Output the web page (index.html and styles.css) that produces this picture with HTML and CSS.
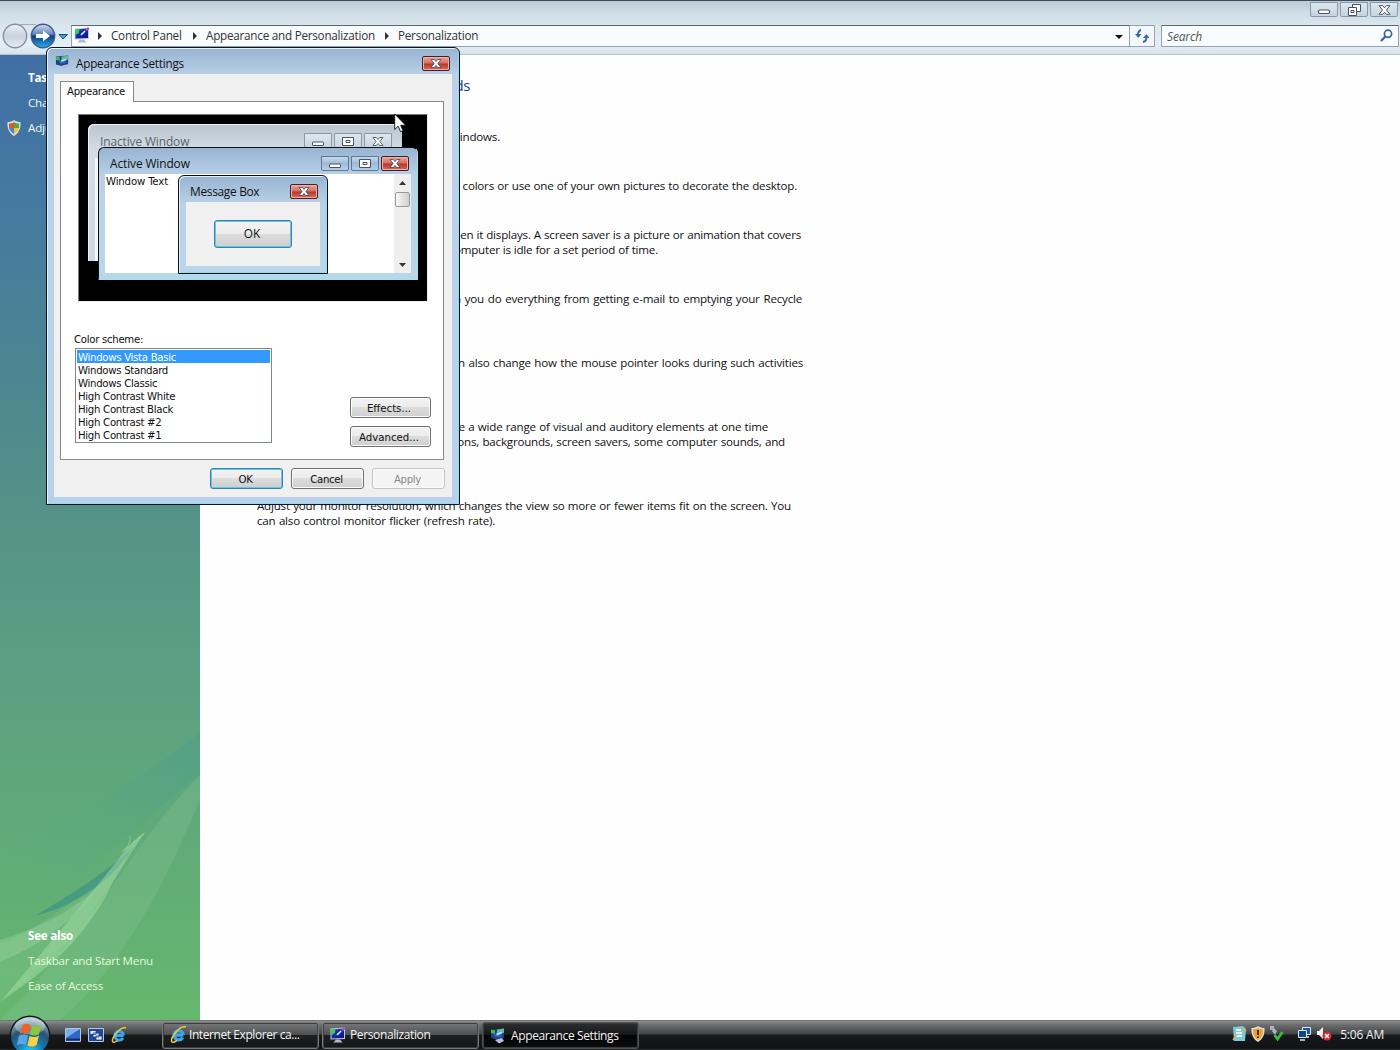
FILE: index.html
```html
<!DOCTYPE html>
<html lang="en">
<head>
<meta charset="utf-8">
<title>Personalization</title>
<link rel="stylesheet" href="styles.css">
</head>
<body>
<svg class="defs" width="0" height="0" aria-hidden="true">
  <defs>
    <linearGradient id="scr" x1="0" y1="0" x2="1" y2="1"><stop offset="0" stop-color="#2bd04a"/><stop offset=".35" stop-color="#1a2fae"/><stop offset="1" stop-color="#0b1478"/></linearGradient>
    <linearGradient id="shine" x1="0" y1="0" x2="0" y2="1"><stop offset="0" stop-color="#d3dff0"/><stop offset=".42" stop-color="#6486c2"/><stop offset=".5" stop-color="#0f3a86"/><stop offset="1" stop-color="#23b4ee"/></linearGradient>
    <linearGradient id="grey" x1="0" y1="0" x2="0" y2="1"><stop offset="0" stop-color="#eef3f6"/><stop offset=".5" stop-color="#c9d3dc"/><stop offset="1" stop-color="#e5edf2"/></linearGradient>
    <radialGradient id="orb" cx=".5" cy=".95" r=".9"><stop offset="0" stop-color="#37d3f2"/><stop offset=".4" stop-color="#1579b0"/><stop offset=".7" stop-color="#2a526f"/><stop offset="1" stop-color="#a9c0cc"/></radialGradient>
    <symbol id="monitor" viewBox="0 0 16 16">
      <path d="M.5 1.500 15 .5V12L.5 12.500z" fill="#c3cde2"/><path d="M1.500 2.500 14 1.500V11L1.500 11.500z" fill="url(#scr)"/><path d="M1.500 2.500 5 2v4L1.500 8z" fill="#2fd34d"/>
      <path d="M7 8 11 4" stroke="#e8f0ff" stroke-width="1.600"/><path d="M11 3l3-3 1.500 2-2.500 2z" fill="#b14fae"/>
      <path d="M6 12.500h4l2.500 3h-9z" fill="#aebccb"/>
    </symbol>
    <symbol id="display" viewBox="0 0 16 16">
      <path d="M1 1.500l13-1v9L8 12 1 10z" fill="#23407f"/><path d="M1 1.500l4 1v3.500L1 5z" fill="#3bc04a"/><path d="M7 1.500l7-1V5L7 5.500z" fill="#5fb9a5"/>
      <path d="M4 6l8-1-1 4-6 0z" fill="#2c62c9"/><path d="M6 5.500l6-2v2l-5 2z" fill="#a7dcf0"/><path d="M5 12l7-2 2 3-5 2.500z" fill="#b3bfd3"/>
    </symbol>
    <symbol id="ie" viewBox="0 0 16 16">
      <path d="M12.600 8.500H5.200M12.600 8.300A4.400 4.400 0 1 0 12 11" fill="none" stroke="#38a8ee" stroke-width="3"/>
      <path d="M2 15C-.5 12 9-1 15 1M2 15c1 .7 3-.3 4.500-1.500" fill="none" stroke="#f2cb3d" stroke-width="1.500"/>
    </symbol>
    <symbol id="shield" viewBox="0 0 14 16">
      <path d="M7 0c2 1.500 4 2 6.500 2 .5 6-1.500 11-6.500 14C2 13 0 8 .5 2 3 2 5 1.500 7 0z" fill="#d7dde2"/>
      <path d="M7 2v6H2V3.500C4 3.500 5.500 3 7 2z" fill="#d8592b"/><path d="M7 2c1.500 1 3 1.500 5 1.500V8H7z" fill="#57a83b"/>
      <path d="M2 8h5v6C4 12 2.500 10 2 8z" fill="#4a86cf"/><path d="M12 8H7v6c3-2 4.500-4 5-6z" fill="#f0c432"/>
    </symbol>
    <symbol id="x" viewBox="0 0 12 9"><path d="M1 .5h3.300L6 2.500 7.700.5H11L7.900 4.500 11 8.500H7.700L6 6.500 4.300 8.500H1l3.100-4z" fill="#fff" stroke="#4a5266" stroke-width=".9"/></symbol>
    <symbol id="min" viewBox="0 0 12 9"><rect x=".5" y="5" width="11" height="3.500" rx=".5" fill="#fff" stroke="#4a5266"/></symbol>
    <symbol id="max" viewBox="0 0 12 9"><path d="M.5.5h11v8H.5z" fill="#fff" stroke="#4a5266"/><path d="M4 3.500h4v2H4z" fill="#fff" stroke="#4a5266"/></symbol>
  </defs>
</svg>

<div class="explorer">
  <header class="frame">
    <div class="caption">
      <span class="cap"><svg width="12" height="9"><use href="#min"/></svg></span>
      <span class="cap"><svg width="13" height="12" viewBox="0 0 13 12"><path d="M4.500.5h8v7h-8z" fill="#fff" stroke="#4a5266"/><path d="M.5 3.500h8v8h-8z" fill="#fff" stroke="#4a5266"/><path d="M3 6.500h3v2H3z" fill="none" stroke="#4a5266"/></svg></span>
      <span class="cap"><svg width="13" height="10"><use href="#x"/></svg></span>
    </div>
    <div class="nav">
      <svg class="travel" width="70" height="28" viewBox="0 0 70 28">
        <path d="M20 2.500h16" stroke="#9fb0bc"/>
        <circle cx="15" cy="14" r="11.700" fill="url(#grey)" stroke="#8493a1" stroke-width="1.400"/>
        <circle cx="43" cy="14" r="11.700" fill="url(#shine)" stroke="#45597e" stroke-width="1.400"/>
        <path d="M36 12h7V8.500l7 5.500-7 5.500V16h-7z" fill="#fff"/>
        <path d="M59 12.500h8.500L63.200 17z" fill="#3da6d8" stroke="#1c4c86"/>
      </svg>
      <div class="address">
        <svg width="16" height="16"><use href="#monitor"/></svg>
        <i class="sep"></i><span class="c1">Control Panel</span>
        <i class="sep"></i><span class="c2">Appearance and Personalization</span>
        <i class="sep"></i><span class="c3">Personalization</span>
        <i class="drop"></i>
      </div>
      <div class="refresh"><svg width="15" height="14" viewBox="0 0 15 14"><path d="M6 1C3.500 1.500 3 3 3 6" fill="none" stroke="#3f68a8" stroke-width="2"/><path d="M0 5h6.500L3.200 9z" fill="#3f68a8"/><path d="M8 13c3-.5 3.500-2 3.500-5" fill="none" stroke="#3f68a8" stroke-width="2"/><path d="M8 9h6.500l-3.200-4z" fill="#3f68a8"/></svg></div>
      <div class="search"><em>Search</em><svg width="13" height="13" viewBox="0 0 13 13"><circle cx="8" cy="4.800" r="3.600" fill="none" stroke="#3e5fa8" stroke-width="1.700"/><path d="M5.300 7.500 1 12" stroke="#3e5fa8" stroke-width="2.200"/></svg></div>
    </div>
  </header>

  <div class="body">
    <aside class="side">
      <svg class="swoosh" width="200" height="380" viewBox="0 0 200 380" preserveAspectRatio="none">
        <defs><linearGradient id="fade" x1="0" y1="1" x2="1" y2="0"><stop offset="0" stop-color="#5fb27c" stop-opacity="0"/><stop offset="1" stop-color="#4a9892"/></linearGradient></defs>
        <path d="M0 215C70 180 140 140 200 93V135C150 170 80 250 0 285z" fill="url(#fade)" opacity=".4"/>
        <path d="M200 135C150 185 120 240 90 275L30 350 0 380h60C130 320 170 230 200 160z" fill="#8cc79c" opacity=".25"/>
        <path d="M0 305C60 275 95 250 145 192 100 265 60 320 0 360z" fill="#93d29a" opacity=".2"/>
        <path d="M35 276C68 256 100 237 134 207 113 238 90 253 66 265 55 270 45 273 35 276z" fill="#3f9484" opacity=".75"/>
        <path d="M145 192c-12 8-18 16-25 25-25 32-60 75-120 145 60-40 88-72 108-110 8-17 20-35 37-60z" fill="#b5e8b2" opacity=".4"/>
        <path d="M0 300C40 287 65 275 95 250 70 285 40 305 0 322z" fill="#a2dba5" opacity=".35"/>
        <path d="M124 210c5-5 7-9 6-14M122 212l22-18" stroke="#a8dca9" fill="none" opacity=".6"/>
      </svg>
      <div class="links">
        <b>Tasks</b>
        <span>Change desktop icons</span>
        <span><svg width="14" height="16"><use href="#shield"/></svg>Adjust font size (DPI)</span>
      </div>
      <div class="links also">
        <b>See also</b>
        <span>Taskbar and Start Menu</span>
        <span>Ease of Access</span>
      </div>
    </aside>
    <main class="content">
      <h1>Personalize appearance and sounds</h1>
      <div class="para"><p style="width:243px">Fine tune the color and style of your windows.</p></div>
      <div class="para"><p style="width:540px">Choose from available backgrounds or colors or use one of your own pictures to decorate the desktop.</p></div>
      <div class="para"><p style="width:544px">Change your screen saver or adjust when it displays. A screen saver is a picture or animation that covers</p><p style="width:401px">your screen and appears when your computer is idle for a set period of time.</p></div>
      <div class="para"><p style="width:545px">Change which sounds are heard when you do everything from getting e-mail to emptying your Recycle</p><p style="width:22px">Bin.</p></div>
      <div class="para"><p style="width:546px">Pick a different mouse pointer. You can also change how the mouse pointer looks during such activities</p><p style="width:140px">as clicking and selecting.</p></div>
      <div class="para"><p style="width:511px">Change the theme. Themes can change a wide range of visual and auditory elements at one time</p><p style="width:528px">including the appearance of menus, icons, backgrounds, screen savers, some computer sounds, and</p><p style="width:90px">mouse pointers.</p></div>
      <div class="para"><p style="width:534px">Adjust your monitor resolution, which changes the view so more or fewer items fit on the screen. You</p><p style="width:238px">can also control monitor flicker (refresh rate).</p></div>
    </main>
  </div>
</div>

<section class="dialog">
  <div class="title"><svg width="15" height="15"><use href="#display"/></svg><span>Appearance Settings</span><i class="btn-x"><svg width="12" height="9"><use href="#x"/></svg></i></div>
  <div class="client">
    <div class="tab">Appearance</div>
    <div class="page">
      <div class="preview">
        <div class="win inactive">
          <div class="bar"><span>Inactive Window</span><i class="cap"><svg width="12" height="9"><use href="#min"/></svg></i><i class="cap"><svg width="12" height="9"><use href="#max"/></svg></i><i class="cap"><svg width="12" height="9"><use href="#x"/></svg></i></div>
          <div class="pane"></div>
        </div>
        <div class="win active">
          <div class="bar"><span>Active Window</span><i class="cap blue"><svg width="12" height="9"><use href="#min"/></svg></i><i class="cap blue"><svg width="12" height="9"><use href="#max"/></svg></i><i class="btn-x"><svg width="12" height="9"><use href="#x"/></svg></i></div>
          <div class="pane"><span>Window Text</span><div class="scroll"><i class="up"></i><i class="thumb"></i><i class="down"></i></div></div>
        </div>
        <div class="win msg">
          <div class="bar"><span>Message Box</span><i class="btn-x"><svg width="12" height="9"><use href="#x"/></svg></i></div>
          <div class="pane"><div class="button default">OK</div></div>
        </div>
      </div>
      <div class="label">Color scheme:</div>
      <div class="choose">
        <ul>
          <li class="on">Windows Vista Basic</li><li>Windows Standard</li><li>Windows Classic</li><li>High Contrast White</li><li>High Contrast Black</li><li>High Contrast #2</li><li>High Contrast #1</li>
        </ul>
        <div class="more"><div class="button">Effects...</div><div class="button">Advanced...</div></div>
      </div>
    </div>
    <div class="actions"><div class="button default">OK</div><div class="button">Cancel</div><div class="button off">Apply</div></div>
  </div>
</section>

<svg class="cursor" width="13" height="20" viewBox="0 0 13 20"><path d="M.7.900v15.600l3.500-3.300 2.400 5.600 2.500-1.100-2.400-5.400h5z" fill="#fff" stroke="#111" stroke-width=".9"/></svg>

<footer class="taskbar">
  <svg class="orb" width="42" height="42" viewBox="0 0 42 42">
    <circle cx="21" cy="21" r="20.500" fill="#10181e"/><circle cx="21" cy="21" r="19" fill="url(#orb)"/>
    <ellipse cx="21" cy="11" rx="15" ry="8.500" fill="#fff" opacity=".32"/>
    <path d="M13.500 10c2.500-1.800 5.500-1.500 8-.3L19.500 19c-3-1.500-6-1.500-9 0z" fill="#e8662a"/>
    <path d="M23 10.300c3 1.500 6.500 1.500 9.500-.5L30 19c-3 2-6 2-9 .500z" fill="#8cc63f"/>
    <path d="M10 20.500c3-1.500 6-1.500 9 0L17 30c-3-1.500-6-1.500-9 0z" fill="#5aa5e6"/>
    <path d="M20.500 21c3 1.500 6.500 1.500 9.500-.5L27.500 30c-3 2-6 2-9 .500z" fill="#fbd13c"/>
  </svg>
  <div class="quick">
    <svg width="16" height="14" viewBox="0 0 16 14"><path d="M.5.500h15v13H.5z" fill="#2d66c4" stroke="#b9c7da"/><path d="M1 1h14L1 10z" fill="#78aef0"/><path d="M1 11.500h14" stroke="#0e2c6a" stroke-width="2"/></svg>
    <svg width="16" height="14" viewBox="0 0 16 14"><path d="M.5.500h15v13H.5z" fill="#1d489c" stroke="#b9c7da"/><path d="M2 2.500h6v4H2zM5 5h6v4H5zM8 8h6v4H8z" fill="#dcebfa" stroke="#13316e" stroke-width=".7"/></svg>
    <svg width="16" height="16"><use href="#ie"/></svg>
  </div>
  <div class="tasks">
    <div class="task t1"><svg width="17" height="17"><use href="#ie"/></svg><span>Internet Explorer ca...</span></div>
    <div class="task t2"><svg width="16" height="16"><use href="#monitor"/></svg><span>Personalization</span></div>
    <div class="task t3"><svg width="16" height="16"><use href="#display"/></svg><span>Appearance Settings</span></div>
  </div>
  <div class="tray">
    <svg width="15" height="15" viewBox="0 0 15 15"><path d="M1 1l10-1 3 3-1 12H2z" fill="#7ec9d8"/><path d="M4 4h5M4 7h6M4 10h6" stroke="#fff" stroke-width="1.500"/><path d="M9 2l5 3M1 14l4-6" stroke="#d5b15c" stroke-width="1.500"/></svg>
    <svg width="14" height="16" viewBox="0 0 14 16"><path d="M7 0c2 1.500 4 2 6.500 2 .5 6-1.500 11-6.500 14C2 13 0 8 .5 2 3 2 5 1.500 7 0z" fill="#d9dde0"/><path d="M7 2c1.500 1 3 1.400 5 1.400.2 4-1 8-5 10.600-4-2.600-5.200-6.600-5-10.600C4 3.400 5.500 3 7 2z" fill="#f2a01f"/><path d="M7 4v5M7 10.500V12" stroke="#332208" stroke-width="1.800"/></svg>
    <svg width="15" height="15" viewBox="0 0 15 15"><path d="M1 0h4v4H1zM5 2l3 3-2 4-3-4z" fill="#aab4ba"/><path d="M5.500 9l3 4L13.500 6" fill="none" stroke="#2fc23c" stroke-width="2.800"/></svg>
    <svg class="net" width="15" height="14" viewBox="0 0 15 14"><path d="M5.500.5h8v7h-8z" fill="#14599c" stroke="#dce9f5"/><path d="M1.500 3.500h8v7h-8z" fill="#0d4680" stroke="#dce9f5"/><path d="M3 13h5M11 9v2" stroke="#dce9f5" stroke-width="1.500"/></svg>
    <svg width="16" height="15" viewBox="0 0 16 15"><path d="M1 5h2l4-4v12L3 9H1z" fill="#eef1f3"/><circle cx="11" cy="10" r="4.500" fill="#d9252b"/><path d="M9 8l4 4M13 8l-4 4" stroke="#fff" stroke-width="1.500"/></svg>
    <span>5:06 AM</span>
  </div>
</footer>
</body>
</html>
```
FILE: styles.css
```css
* { box-sizing: border-box; }
body { margin: 0; width: 1400px; height: 1050px; overflow: hidden; position: relative; background: #fff; font: 12px/15px "Open Sans", "Noto Sans", sans-serif; color: #111; display: flex; flex-direction: column; }
svg { display: block; flex: none; }
i { font-style: normal; }
.defs { position: absolute; }
span, .tab, .label, li, .button { white-space: nowrap; }

.explorer { height: 1020px; display: flex; flex-direction: column; }
.frame { height: 55px; border-top: 1px solid #3d4a5a; border-bottom: 1px solid #b3c2cf; background: linear-gradient(#bccad6 0, #d0dde6 12px, #dae6ee 24px, #e5eef5 44px, #d5e1ea 54px); }
.caption { height: 21px; display: flex; justify-content: flex-end; gap: 2px; padding: 1px 2px 4px 0; }
.cap { width: 28px; height: 15px; border: 1px solid #8998aa; border-radius: 0 0 2px 2px; display: flex; align-items: center; justify-content: center; background: linear-gradient(#dde7ef, #c5d3df); }
.nav { height: 28px; display: flex; align-items: center; }
.travel { margin-right: 1px; }
.address { width: 1059px; height: 22px; border: 1px solid #92a2b1; border-top-color: #5b6873; background: #f8fcfe; display: flex; align-items: center; padding-left: 2px; color: #333; }
.address svg { margin-bottom: 2px; }
.sep { width: 4px; height: 8px; background: #333; clip-path: polygon(0 0, 100% 50%, 0 100%); margin: 0 9px 0 8px; flex: none; }
.address span { font-size: 11.700px; letter-spacing: -.24px; margin-top: -1px; }
.c1 { width: 74px; } .c2 { width: 171px; } .c3 { width: 80px; }
.drop { width: 8px; height: 4px; background: #111; clip-path: polygon(0 0, 100% 0, 50% 100%); margin: 2px 6px 0 auto; }
.refresh { width: 25px; height: 22px; border: 1px solid #92a2b1; border-left: 0; background: #f2f8fc; display: flex; align-items: center; justify-content: center; }
.search { flex: 1; height: 22px; margin: 0 1px 0 6px; border: 1px solid #92a2b1; border-top-color: #5b6873; background: #f8fcfe; display: flex; align-items: center; justify-content: space-between; padding: 0 5px; color: #555; }
.search em { letter-spacing: -.15px; padding-top: 1px; }
.search svg { margin-bottom: 1px; }

.body { flex: 1; display: flex; }
.side { width: 200px; position: relative; display: flex; flex-direction: column; justify-content: space-between; padding: 15px 0 27px 28px; background: linear-gradient(#416fa4 0, #447aa0 150px, #4c8691 320px, #549287 450px, #5a9e83 600px, #61ac77 800px, #66b76e 965px); color: #fff; }
.swoosh { position: absolute; left: 0; bottom: 0; }
.links { display: flex; flex-direction: column; gap: 10px; position: relative; font-size: 11.600px; letter-spacing: -.2px; }
.links span { display: flex; color: #eef6f5; }
.links span svg { margin: 0 7px 0 -21px; }
.also span { color: #e2f8dc; }
.content { flex: 1; padding: 21px 0 0 57px; display: flex; flex-direction: column; gap: 34px; background: #fefefe; }
h1 { margin: 0; width: 213px; height: 19px; font-weight: 400; font-size: 15px; line-height: 19px; letter-spacing: -.45px; color: #233a91; white-space: nowrap; display: flex; justify-content: flex-end; }
p { margin: 0; height: 15px; white-space: normal; text-align-last: justify; font-size: 11.600px; letter-spacing: -.21px; }

.dialog { position: absolute; left: 46px; top: 47px; width: 414px; height: 458px; border: 1px solid #0c1620; border-radius: 6px 6px 0 0; background: linear-gradient(#98b4d2, #bad1e8 28px, #b9d1ea); box-shadow: inset 1px 1px #e6f4ff, inset -1px -1px #8fdcf0; padding: 0 7px 7px; display: flex; flex-direction: column; }
.title { height: 26px; display: flex; align-items: center; padding: 4px 2px 0; gap: 6px; }
.title svg { margin-bottom: 2px; }
.title span { letter-spacing: -.2px; font-size: 11.700px; }
.btn-x { width: 28px; height: 15px; border: 1px solid #4e1c26; border-radius: 2px; display: flex; align-items: center; justify-content: center; margin-left: auto; background: linear-gradient(#e8a799, #d36f5e 48%, #b83327 52%, #d6705c); box-shadow: inset 0 0 0 1px #eab1a5; }
.title svg:first-child { margin-left: -1px; }
.btn-x svg { margin: 0 !important; }
.client { flex: 1; background: #f0f0f0; padding: 7px 7px 0 6px; font: 11.300px/13px "DejaVu Sans Condensed", "DejaVu Sans", sans-serif; letter-spacing: -.3px; color: #111; }
.tab { width: 74px; height: 21px; margin-bottom: -1px; position: relative; z-index: 1; background: #fff; border: 1px solid #868b91; border-bottom: 0; padding: 3px 6px; }
.page { height: 359px; width: 384px; border: 1px solid #868b91; background: #fff; padding: 12px 12px 0 17px; }
.preview { position: relative; width: 350px; height: 188px; background: #000; border: 1px solid #777; border-right-color: #eee; border-bottom-color: #eee; overflow: hidden; font: 11.900px/15px "Open Sans", sans-serif; letter-spacing: -.1px; }
.win { position: absolute; display: flex; flex-direction: column; }
.bar { display: flex; align-items: center; gap: 2px; }
.bar span { margin-right: auto; }
.bar .btn-x { margin-left: 0; }
.bar .cap { height: 16px; }
.bar .blue { height: 15px; background: linear-gradient(#c5d9ee, #9fbad7 50%, #b4cfe8); border-color: #5f7695; }
.inactive { left: 9px; top: 9px; width: 314px; height: 137px; background: linear-gradient(#bac5cf, #d5dee6 28px, #ccd8e2); border-radius: 6px 6px 0 0; padding: 0 7px; color: #5b656e; box-shadow: inset 1px 1px #eef2f5; }
.inactive .bar { height: 34px; padding: 0 3px 0 5px; }
.inactive .pane { flex: 1; background: #f3f6f8; }
.active { left: 19px; top: 32px; width: 320px; height: 133px; background: linear-gradient(#98b4d2, #b9d1e8 28px, #b9d7ea); border: 1px solid #111; border-color: #111 #9be3ee #9be3ee #111; border-radius: 6px 6px 0 0; padding: 0 6px 6px; }
.active .bar { height: 26px; padding: 4px 2px 0 5px; }
.active .pane { flex: 1; background: #fff; display: flex; justify-content: space-between; font: 11.300px/13px "DejaVu Sans Condensed", sans-serif; letter-spacing: -.15px; }
.active .pane span { padding: 1px; }
.scroll { width: 17px; background: #efefef; display: flex; flex-direction: column; align-items: center; padding: 7px 0 6px; }
.up, .down { width: 7px; height: 4px; background: #333; clip-path: polygon(50% 0, 100% 100%, 0 100%); }
.down { clip-path: polygon(0 0, 100% 0, 50% 100%); margin-top: auto; }
.thumb { width: 15px; height: 15px; margin-top: 7px; border: 1px solid #999; border-radius: 2px; background: linear-gradient(90deg, #f8f8f8, #cfcfcf); }
.msg { left: 99px; top: 60px; width: 150px; height: 99px; background: linear-gradient(#98b4d2, #b9d1e8 28px, #b9d7ea); border: 1px solid #111; border-radius: 6px 6px 0 0; padding: 0 7px 7px; box-shadow: inset 1px 1px #e0efff, inset -1px -1px #8fdcf0; }
.msg .bar { height: 26px; padding: 4px 2px 0 4px; }
.msg .bar span { letter-spacing: -.3px; }
.msg .pane { flex: 1; background: #f0f0f0; display: flex; align-items: center; justify-content: center; }
.msg .button { width: 78px; height: 28px; margin-bottom: 1px; padding-right: 2px; }
.button { width: 73px; height: 21px; border: 1px solid #707070; border-radius: 3px; display: flex; align-items: center; justify-content: center; background: linear-gradient(#f3f3f3, #ebebeb 49%, #dcdcdc 50%, #cfcfcf); box-shadow: inset 0 0 0 1px #fafafa; }
.default { border-color: #3c7fa8; box-shadow: inset 0 0 0 1px #5ccbe6; }
.off { border-color: #c2c5c8; color: #8a8a8a; background: #f4f4f4; }
.label { margin: 31px 0 2px -4px; letter-spacing: -.3px; }
.choose { display: flex; justify-content: space-between; margin-left: -3px; }
ul { list-style: none; margin: 0; padding: 1px; width: 197px; height: 95px; border: 1px solid #7b8694; }
li { height: 13px; padding-left: 1px; line-height: 15px; }
.on { background: #3399ff; color: #fff; }
.more { padding-top: 49px; display: flex; flex-direction: column; gap: 8px; letter-spacing: 0; }
.more .button { width: 81px; padding: 1px 3px 0 0; }
.actions { display: flex; gap: 8px; justify-content: flex-end; padding-top: 8px; }
.actions .button { padding: 1px 2px 0 0; }
.cursor { position: absolute; left: 394px; top: 113px; }

.taskbar { height: 30px; position: relative; display: flex; align-items: center; color: #f4f4f4; background: linear-gradient(#5b5e60 0, #8b8d8e 1px, #6a6c6e 5px, #414345 14px, #191a1b 15px, #111213 28px, #2b2d2e); }
.orb { position: absolute; left: 9px; top: -5px; }
.quick { margin-left: 65px; width: 97px; display: flex; gap: 7px; align-items: center; }
.tasks { display: flex; gap: 3px; padding-top: 1px; }
.task { width: 157px; height: 27px; border: 1px solid #77797a; border-radius: 3px; display: flex; align-items: center; gap: 2px; padding: 0 0 2px 7px; background: linear-gradient(#77797b, #4c4e50 48%, #1e1f20 50%, #151617); box-shadow: inset 0 0 0 1px #3b3d3e; font-size: 12px; letter-spacing: -.38px; }
.t1 { letter-spacing: -.42px; }
.t2 { gap: 4px; } .t3 { background: linear-gradient(#2c2e2f, #161718 48%, #050505 50%, #0c0c0c); gap: 5px; padding: 0 0 0 7px; border-color: #505253; }
.tray { margin-left: auto; display: flex; align-items: center; gap: 4px; padding: 0 16px 2px 0; }
.tray svg { margin-top: -1px; }
.tray .net { margin-left: 9px; }
.tray span { margin-left: 4px; letter-spacing: -.2px; padding-top: 1px; }
```
